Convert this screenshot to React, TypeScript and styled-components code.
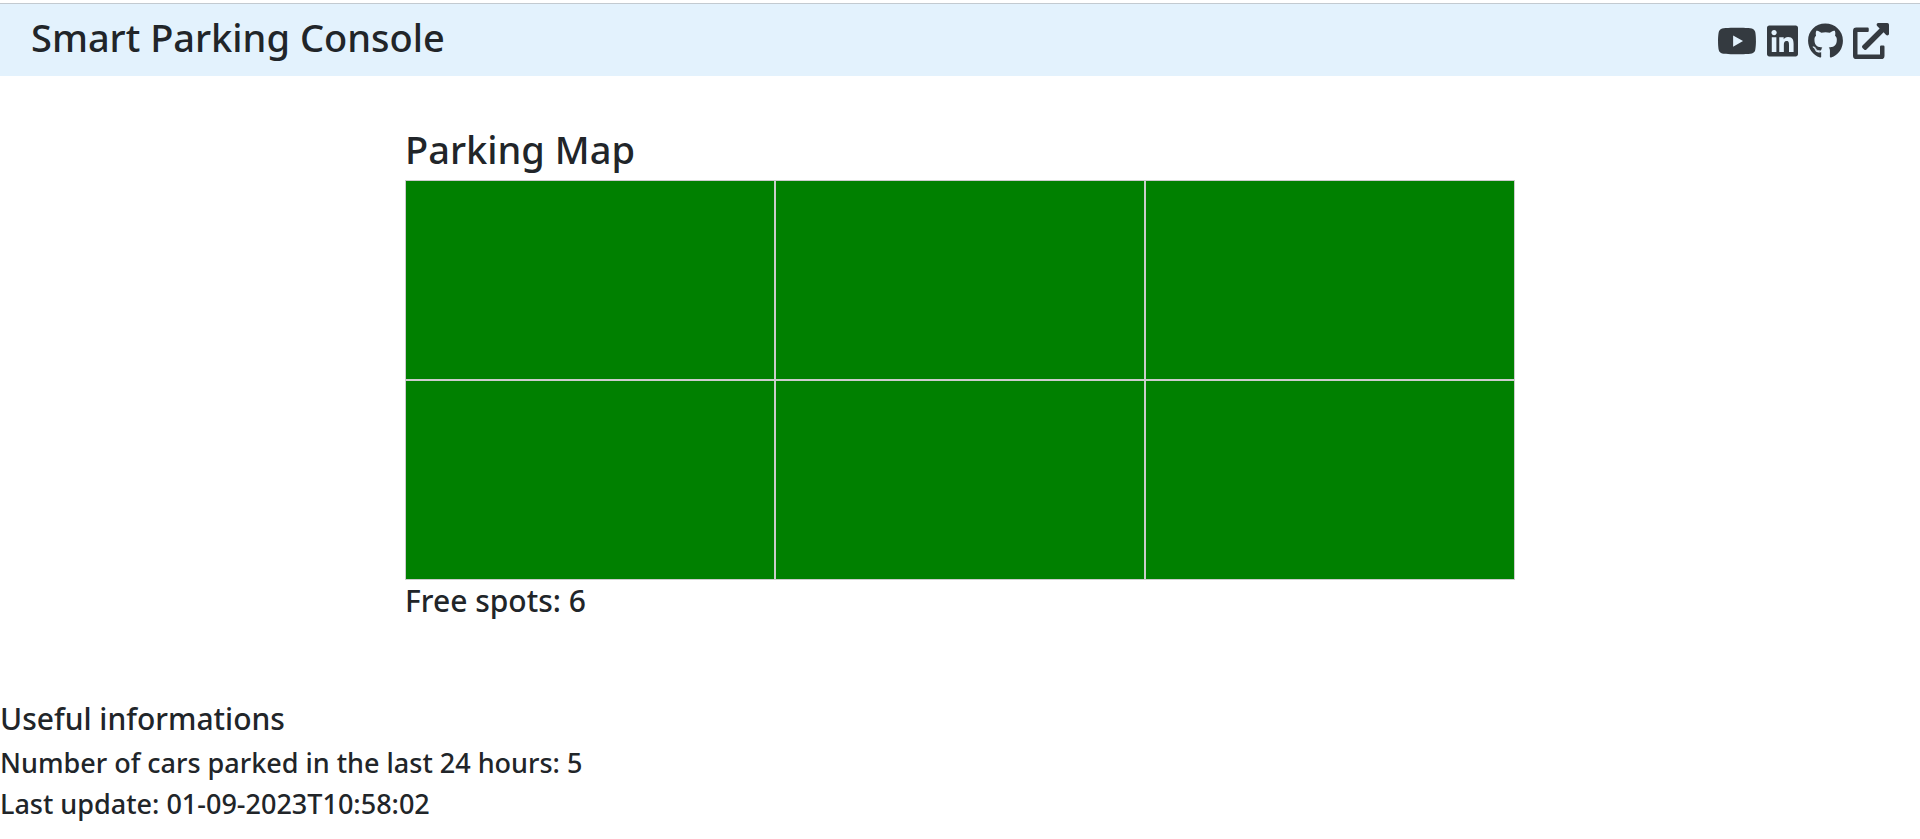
import React from "react";
import styled, { createGlobalStyle } from "styled-components";
import { FaExternalLinkAlt, FaGithub, FaLinkedin, FaYoutube } from "react-icons/fa";

const GlobalStyle = createGlobalStyle`
  *, *::before, *::after { box-sizing: border-box; }
  body {
    margin: 0;
    background: #fff;
    color: #212529;
    font-family: "Noto Sans", "Open Sans", sans-serif;
    font-weight: 500;
  }
`;

const Page = styled.div`
  padding-top: 3px;
`;

const Header = styled.header`
  display: flex;
  align-items: flex-start;
  justify-content: space-between;
  height: 73px;
  padding: 9px 31px 0;
  border-top: 1px solid #c3cad0;
  background: #e3f2fd;
`;

const Title = styled.h1`
  margin: 0;
  font-size: 38px;
  font-weight: 500;
  line-height: 48px;
`;

const Links = styled.nav`
  display: flex;
  align-items: center;
  gap: 10px;
  padding-top: 10px;
`;

const IconLink = styled.a<{ $width: number }>`
  display: flex;
  color: #343a40;

  svg {
    width: ${({ $width }) => $width}px;
    height: 36px;
  }
`;

const Container = styled.main`
  max-width: 1140px;
  margin: 0 auto;
  padding: 49px 15px 0;
`;

const MapTitle = styled(Title).attrs({ as: "h2" })`
  padding-bottom: 7px;
`;

const ParkingGrid = styled.div`
  display: grid;
  grid-template-columns: repeat(3, 1fr);
  grid-auto-rows: 200px;
`;

const Spot = styled.div<{ $free: boolean }>`
  border: 1px solid #ccc;
  background: ${({ $free }) => ($free ? "green" : "red")};
`;

const Subheading = styled.h3`
  margin: 0;
  font-size: 30px;
  font-weight: 500;
  line-height: 42px;
`;

const Info = styled.section`
  padding: 76px 0 16px;
`;

const InfoList = styled.div`
  display: grid;
  gap: 7px;
  padding-top: 6px;
`;

const InfoLine = styled.p`
  margin: 0;
  font-size: 27px;
  line-height: 34px;
`;

const links = [
  { label: "YouTube", Icon: FaYoutube, width: 40 },
  { label: "LinkedIn", Icon: FaLinkedin, width: 31 },
  { label: "GitHub", Icon: FaGithub, width: 35 },
  { label: "Website", Icon: FaExternalLinkAlt, width: 36 },
];

const spots = [true, true, true, true, true, true];

export default function App() {
  return (
    <Page>
      <GlobalStyle />
      <Header>
        <Title>Smart Parking Console</Title>
        <Links aria-label="External links">
          {links.map(({ label, Icon, width }) => (
            <IconLink key={label} href="#" aria-label={label} $width={width}>
              <Icon />
            </IconLink>
          ))}
        </Links>
      </Header>
      <Container>
        <MapTitle>Parking Map</MapTitle>
        <ParkingGrid>
          {spots.map((free, index) => (
            <Spot key={index} $free={free} />
          ))}
        </ParkingGrid>
        <Subheading>Free spots: {spots.filter(Boolean).length}</Subheading>
      </Container>
      <Info>
        <Subheading>Useful informations</Subheading>
        <InfoList>
          <InfoLine>Number of cars parked in the last 24 hours: 5</InfoLine>
          <InfoLine>Last update: 01-09-2023T10:58:02</InfoLine>
        </InfoList>
      </Info>
    </Page>
  );
}
